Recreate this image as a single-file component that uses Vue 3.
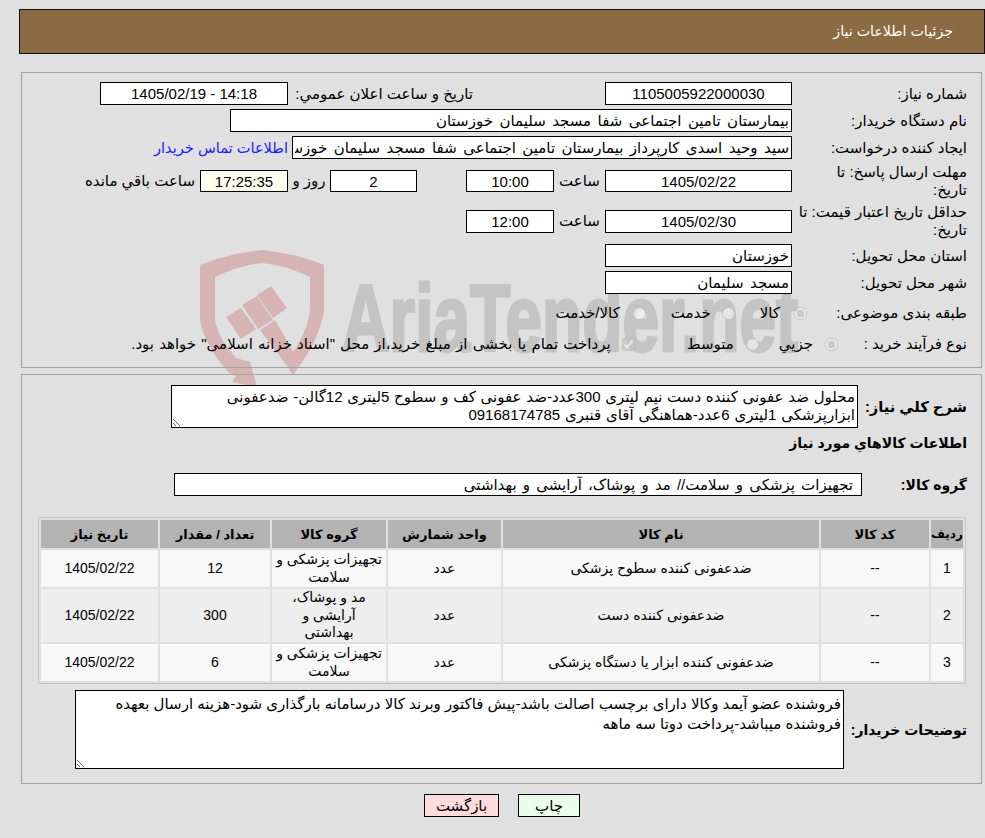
<template>
  <div class="page">
    <!-- واترمارک پشت فرم -->
    <svg class="watermark" viewBox="0 0 610 140" width="610" height="140">
      <path class="wm-red" d="M0 15 Q30 3 62 0 Q95 3 124 15 L124 60 Q121 88 93 125 L85 113 Q108 85 110 58 L110 27 Q85 15 62 13 Q40 15 15 27 L15 70 Q18 88 36 108 L50 112 L57 137 L32 132 L36 126 L28 122 Q3 92 0 70 Z" />
      <path class="wm-red" d="M26 67 L41 58 L56 79 L41 89 Z M42 55 L57 46 L73 70 L58 79 Z M57 45 L71 36 L87 58 L73 68 Z M60 80 L75 70 L97 108 L85 113 Z" />
      <text class="wm-text" x="142" y="101" textLength="456" lengthAdjust="spacingAndGlyphs">AriaTender.net</text>
    </svg>

    <div class="title-bar">جزئیات اطلاعات نیاز</div>

    <section class="panel panel-info">
      <div class="row row-1">
        <label class="lbl">شماره نیاز:</label>
        <input class="field w-187" readonly value="1105005922000030" />
        <label class="lbl-public">تاریخ و ساعت اعلان عمومي:</label>
        <input class="field w-188" readonly value="14:18 - 1405/02/19" />
      </div>
      <div class="row">
        <label class="lbl">نام دستگاه خریدار:</label>
        <input class="field field-text w-562" readonly value="بیمارستان تامین اجتماعی شفا مسجد سلیمان خوزستان" />
      </div>
      <div class="row">
        <label class="lbl">ایجاد کننده درخواست:</label>
        <input class="field field-text w-500" readonly value="سید وحید اسدی کارپرداز بیمارستان تامین اجتماعی شفا مسجد سلیمان خوزستان" />
        <a class="contact">اطلاعات تماس خریدار</a>
      </div>
      <div class="row row-date row-date1">
        <label class="lbl two-line">مهلت ارسال پاسخ: تا تاریخ:</label>
        <input class="field w-187" readonly value="1405/02/22" />
        <span class="hour">ساعت</span>
        <input class="field w-88" readonly value="10:00" />
        <input class="field w-87 days" readonly value="2" />
        <span class="day-text">روز و</span>
        <input class="field w-88 timer" readonly value="17:25:35" />
        <span class="left-text">ساعت باقي مانده</span>
      </div>
      <div class="row row-date row-date2">
        <label class="lbl">حداقل تاریخ اعتبار قیمت: تا تاریخ:</label>
        <input class="field w-187" readonly value="1405/02/30" />
        <span class="hour">ساعت</span>
        <input class="field w-88" readonly value="12:00" />
      </div>
      <div class="row row-place">
        <label class="lbl">استان محل تحویل:</label>
        <input class="field field-text w-187" readonly value="خوزستان" />
      </div>
      <div class="row">
        <label class="lbl">شهر محل تحویل:</label>
        <input class="field field-text w-187" readonly value="مسجد سلیمان" />
      </div>
      <div class="row row-radio row-cat">
        <label class="lbl">طبقه بندی موضوعی:</label>
        <input class="radio r-kala" type="radio" name="cat" disabled checked />
        <span class="opt">کالا</span>
        <input class="radio r-khedmat" type="radio" name="cat" disabled />
        <span class="opt">خدمت</span>
        <input class="radio r-both" type="radio" name="cat" disabled />
        <span class="opt">کالا/خدمت</span>
      </div>
      <div class="row row-radio row-buy">
        <label class="lbl">نوع فرآیند خرید :</label>
        <input class="radio r-small" type="radio" name="buy" disabled checked />
        <span class="opt">جزیي</span>
        <input class="radio r-mid" type="radio" name="buy" disabled />
        <span class="opt">متوسط</span>
        <input class="check" type="checkbox" disabled checked />
        <span class="opt opt-long">پرداخت تمام یا بخشی از مبلغ خرید،از محل "اسناد خزانه اسلامی" خواهد بود.</span>
      </div>
    </section>

    <section class="panel panel-goods">
      <div class="row row-desc">
        <label class="lbl-bold lbl-desc">شرح کلي نیاز:</label>
        <textarea class="area area-desc" readonly>{{ needText }}</textarea>
      </div>
      <div class="goods-title">اطلاعات کالاهاي مورد نیاز</div>
      <div class="row row-group">
        <label class="lbl-bold lbl-group">گروه کالا:</label>
        <input class="field group-input" readonly value="تجهیزات پزشکی و سلامت// مد و پوشاک، آرایشی و بهداشتی" />
      </div>

      <table class="goods">
        <colgroup>
          <col style="width: 32px" />
          <col style="width: 108px" />
          <col style="width: 316px" />
          <col style="width: 113px" />
          <col style="width: 114px" />
          <col style="width: 110px" />
          <col style="width: 117px" />
        </colgroup>
        <thead>
          <tr>
            <th class="th-row">ردیف</th>
            <th>کد کالا</th>
            <th>نام کالا</th>
            <th>واحد شمارش</th>
            <th>گروه کالا</th>
            <th>تعداد / مقدار</th>
            <th>تاریخ نیاز</th>
          </tr>
        </thead>
        <tbody>
          <tr v-for="item in items" :key="item.id">
            <td>{{ item.id }}</td>
            <td>--</td>
            <td>{{ item.name }}</td>
            <td>عدد</td>
            <td class="group-cell">{{ item.group }}</td>
            <td>{{ item.qty }}</td>
            <td>1405/02/22</td>
          </tr>
        </tbody>
      </table>

      <div class="row row-note">
        <label class="lbl-bold lbl-note">توضیحات خریدار:</label>
        <textarea class="area area-note" readonly>{{ noteText }}</textarea>
      </div>
    </section>

    <div class="actions">
      <button class="btn btn-print">چاپ</button>
      <button class="btn btn-back">بازگشت</button>
    </div>
  </div>
</template>

<script setup>
const needText = 'محلول ضد عفونی کننده دست نیم لیتری 300عدد-ضد عفونی کف و سطوح 5لیتری 12گالن- ضدعفونی ابزارپزشکی 1لیتری 6عدد-هماهنگی آقای قنبری 09168174785'
const noteText = 'فروشنده عضو آیمد وکالا دارای برچسب اصالت باشد-پیش فاکتور وبرند کالا درسامانه بارگذاری شود-هزینه ارسال بعهده فروشنده میباشد-پرداخت دوتا سه ماهه'

const items = [
  { id: 1, name: 'ضدعفونی کننده سطوح پزشکی', group: 'تجهیزات پزشکی و سلامت', qty: 12 },
  { id: 2, name: 'ضدعفونی کننده دست', group: 'مد و پوشاک، آرایشی و بهداشتی', qty: 300 },
  { id: 3, name: 'ضدعفونی کننده ابزار یا دستگاه پزشکی', group: 'تجهیزات پزشکی و سلامت', qty: 6 }
]
</script>

<style>
html,
body {
  margin: 0;
  background: #e0e0e0;
}
</style>

<style scoped>
.page {
  position: relative;
  width: 985px;
  height: 838px;
  padding-top: 9px;
  box-sizing: border-box;
  overflow: hidden;
  direction: rtl;
  font-family: "Liberation Sans", "DejaVu Sans", sans-serif;
  font-size: 15px;
  color: #000;
}

.watermark {
  position: absolute;
  left: 200px;
  top: 250px;
  z-index: 0;
  direction: ltr;
}

.wm-red {
  fill: #d6b4b4;
}

.wm-text {
  font-family: "Liberation Sans", sans-serif;
  font-weight: 700;
  font-size: 94px;
  fill: #c4c4c4;
  stroke: #c4c4c4;
  stroke-width: 3px;
}

.title-bar {
  position: relative;
  height: 43px;
  margin-left: 19px;
  padding-right: 31px;
  line-height: 43px;
  background: #8b6c42;
  border: 1px solid #111;
  color: #fff;
  font-size: 14.2px;
}

.panel {
  position: relative;
  margin: 0 3px 0 21px;
  border: 1px solid #a3a3a3;
  box-sizing: border-box;
  padding-right: 14px;
}

.panel-info {
  height: 296px;
  margin-top: 18px;
  padding-top: 9px;
}

.panel-goods {
  height: 410px;
  margin-top: 6px;
  padding-top: 10px;
}

.row {
  display: flex;
  align-items: center;
  height: 23px;
  margin-bottom: 4px;
}

.lbl {
  width: 175px;
  flex: none;
  box-sizing: border-box;
  line-height: 18px;
}

/* این برچسب در مرجع دو خطی است */
.two-line {
  padding-left: 12px;
}

.field {
  box-sizing: border-box;
  height: 23px;
  margin: 0;
  padding: 0 2px;
  border: 1px solid #000;
  border-radius: 0;
  background: #fff;
  color: #000;
  font: inherit;
  text-align: center;
  outline: none;
  direction: rtl;
}

.field-text {
  text-align: right;
  word-spacing: 2.3px;
}

.w-187 { width: 187px; }
.w-188 { width: 188px; }
.w-562 { width: 562px; }
.w-500 { width: 500px; }
.w-88 { width: 88px; }
.w-87 { width: 87px; }

.lbl-public {
  width: 317px;
  box-sizing: border-box;
  padding-right: 132px;
  white-space: nowrap;
}

.contact {
  margin-right: 4px;
  color: #1a1aff;
  font-size: 14.6px;
  white-space: nowrap;
}

.row-date {
  height: 32px;
  margin-top: 6px;
  margin-bottom: 0;
}

.row-date1 .field {
  height: 22px;
}

.row-date2 {
  margin-top: 8px;
}

.row-place {
  margin-top: 7px;
}

.hour {
  width: 51px;
  text-align: center;
}

.days {
  margin-right: 49px;
}

.day-text {
  width: 42px;
  text-align: center;
}

.timer {
  background: #fffff0;
}

.left-text {
  margin-right: 5px;
  white-space: nowrap;
}

.row-radio {
  height: 20px;
  margin-top: 9px;
  margin-bottom: 0;
}

.row-cat .lbl {
  width: 160px;
}

.row-buy {
  margin-top: 11px;
}

.row-buy .lbl {
  width: 129px;
}

.radio,
.check {
  flex: none;
  margin: 0;
}

.opt {
  white-space: nowrap;
}

.opt-long {
  word-spacing: 1px;
}

.r-kala { margin-left: 14px; }
.r-khedmat { margin-right: 25px; margin-left: 11px; }
.r-both { margin-right: 25px; margin-left: 13px; }
.r-small { margin-left: 12px; }
.r-mid { margin-right: 20px; margin-left: 12px; }
.check { margin-right: 52px; margin-left: 11px; }

.row-desc {
  height: 43px;
  margin-bottom: 0;
}

.lbl-bold {
  flex: none;
  font-size: 14px;
  font-weight: 700;
  white-space: nowrap;
}

.lbl-desc {
  width: 109px;
  font-size: 14.7px;
}

.area {
  box-sizing: border-box;
  margin: 0;
  padding: 2px;
  border: 1px solid #000;
  border-radius: 0;
  background: #fff;
  color: #000;
  font: inherit;
  line-height: 18px;
  outline: none;
  direction: rtl;
}

.area-desc {
  width: 687px;
  height: 43px;
  word-spacing: 0.6px;
}

.goods-title {
  margin-top: 6px;
  font-size: 14px;
  font-weight: 700;
  line-height: 18px;
}

.row-group {
  margin-top: 21px;
  margin-bottom: 0;
}

.lbl-group {
  width: 105px;
}

.group-input {
  width: 688px;
  padding: 0 8px;
  text-align: right;
  word-spacing: 2px;
}

.goods {
  width: 928px;
  margin: 21px 1px 0 0;
  border: 1px solid #c4c4c4;
  border-spacing: 2px;
  border-collapse: separate;
  table-layout: fixed;
  box-sizing: border-box;
}

.goods th {
  height: 28px;
  padding: 0;
  background: #b3b3b3;
  font-size: 13px;
  text-align: center;
  white-space: nowrap;
}

.goods .th-row {
  font-size: 12px;
}

.goods td {
  height: 37px;
  padding: 0;
  background: #f8f8f8;
  font-size: 14px;
  text-align: center;
  line-height: 17.7px;
}

.goods tbody tr:nth-child(2) td {
  background: #eee;
}

.goods .group-cell {
  padding: 0 3px;
}

.goods tbody tr:nth-child(2) .group-cell {
  padding: 0 8px;
}

.row-note {
  height: 79px;
  margin-top: 6px;
}

.lbl-note {
  width: 123px;
}

.area-note {
  width: 769px;
  height: 79px;
  padding-top: 3px;
  line-height: 20px;
}

.actions {
  position: relative;
  display: flex;
  justify-content: center;
  gap: 19px;
  width: 985px;
  margin-top: 10px;
  padding-left: 19px;
  box-sizing: border-box;
}

.btn {
  height: 23px;
  padding: 0;
  border: 1px solid #000;
  border-radius: 0;
  color: #000;
  font: inherit;
}

.btn-print {
  width: 62px;
  background: #eaffea;
}

.btn-back {
  width: 75px;
  background: #ffdcdc;
}
</style>
